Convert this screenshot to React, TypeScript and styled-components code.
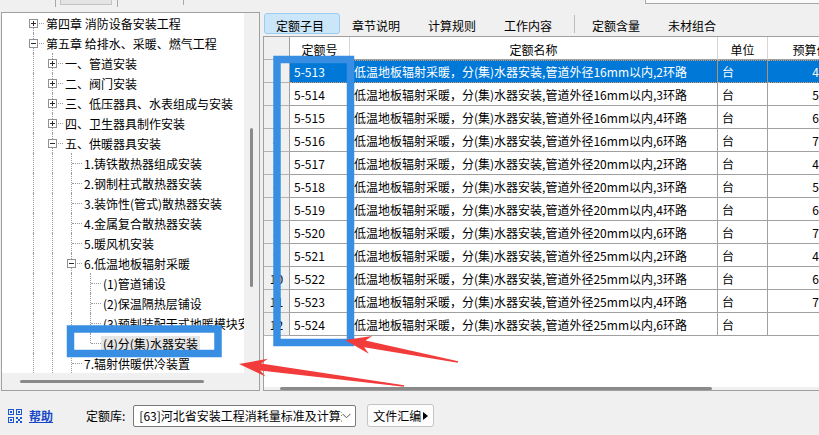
import React from 'react';
import styled, { createGlobalStyle } from 'styled-components';

const GlobalStyle = createGlobalStyle`
  html, body {
    margin: 0;
    padding: 0;
    background: #f0f0f0;
    overflow: hidden;
  }
  body {
    font-family: "Noto Sans CJK SC", "Noto Sans", sans-serif;
    font-size: 12px;
    color: #000;
  }
  * {
    box-sizing: border-box;
  }
`;

const Page = styled.div`
  position: relative;
  width: 819px;
  height: 435px;
  display: flex;
  flex-direction: column;
  overflow: hidden;
  background: #f0f0f0;
`;

/* remains of the toolbar cut off at the top */
const TopStrip = styled.div`
  height: 12px;
  display: flex;
  align-items: flex-start;
  flex-shrink: 0;
`;

const StubLine = styled.div<{ $ml: number; $h: number }>`
  width: 1px;
  height: ${p => p.$h}px;
  margin-left: ${p => p.$ml}px;
  background: #a8a8a8;
`;

const StubBox = styled.div`
  width: 52px;
  height: 5px;
  margin-left: 4px;
  background: #e4e4e4;
  border: 1px solid #c4c4c4;
  border-top: none;
`;

const StubField = styled.div`
  margin-left: auto;
  width: 174px;
  height: 4px;
  background: #fafafa;
  border-left: 1px solid #a8a8a8;
  border-bottom: 1px solid #a8a8a8;
`;

const Main = styled.div`
  display: flex;
  height: 379px;
  flex-shrink: 0;
`;

/* ---------- tree ---------- */

const TreePanel = styled.div`
  margin-left: 1px;
  width: 259px;
  border: 1px solid #a0a0a0;
  display: grid;
  grid-template-columns: 1fr 15px;
  grid-template-rows: 1fr 17px;
  background: #f0f0f0;
  flex-shrink: 0;
`;

const TreeBody = styled.div`
  background: #fff;
  overflow: hidden;
  padding-left: 22px;
`;

const TreeRow = styled.div`
  display: flex;
  align-items: center;
  height: 20px;
`;

const Guide = styled.div`
  width: 19px;
  height: 20px;
  flex-shrink: 0;
  position: relative;
  &::before {
    content: '';
    position: absolute;
    left: 9px;
    top: 0;
    bottom: 0;
    border-left: 1px dotted #9a9a9a;
  }
`;

const Connector = styled.div<{ $noTop?: boolean; $hasNext?: boolean }>`
  width: 19px;
  height: 20px;
  flex-shrink: 0;
  position: relative;
  display: flex;
  align-items: center;
  justify-content: center;
  &::before {
    content: '';
    position: absolute;
    left: 9px;
    top: ${p => (p.$noTop ? 10 : 0)}px;
    bottom: ${p => (p.$hasNext ? 0 : 10)}px;
    border-left: 1px dotted #9a9a9a;
  }
  &::after {
    content: '';
    position: absolute;
    left: 10px;
    right: -1px;
    top: 10px;
    border-top: 1px dotted #9a9a9a;
  }
`;

const Expander = styled.div`
  position: relative;
  z-index: 1;
  width: 9px;
  height: 9px;
  margin-right: 1px;
  border: 1px solid #919191;
  background: #fff;
  display: flex;
  align-items: center;
  justify-content: center;
`;

const TreeLabel = styled.span<{ $sel?: boolean }>`
  margin-left: 1px;
  padding: 0 2px;
  line-height: 15px;
  white-space: nowrap;
  background: ${p => (p.$sel ? '#e6e6e6' : 'transparent')};
`;

const VScroll = styled.div`
  display: flex;
  justify-content: center;
  padding-top: 115px;
`;

const VThumb = styled.div`
  width: 3px;
  height: 159px;
  border-radius: 2px;
  background: #8a8a8a;
`;

const HScroll = styled.div<{ $pad: number }>`
  display: flex;
  align-items: center;
  padding-left: ${p => p.$pad}px;
  background: #f0f0f0;
`;

const HThumb = styled.div<{ $w: number }>`
  width: ${p => p.$w}px;
  height: 3px;
  border-radius: 2px;
  background: #8a8a8a;
`;

const Corner = styled.div`
  background: #f0f0f0;
`;

/* ---------- right panel ---------- */

const RightPanel = styled.div`
  margin-left: 3px;
  flex: 1;
  min-width: 0;
  display: flex;
  flex-direction: column;
`;

const Tabs = styled.div`
  height: 24px;
  display: flex;
  align-items: flex-start;
  padding: 1px 0 0 1px;
  flex-shrink: 0;
`;

const Tab = styled.div<{ $active?: boolean }>`
  height: 21px;
  display: flex;
  align-items: center;
  padding: 3px 15px 0 11px;
  white-space: nowrap;
  border: 1px solid ${p => (p.$active ? '#99cdf2' : 'transparent')};
  border-radius: 3px;
  background: ${p => (p.$active ? '#cce6f9' : 'transparent')};
`;

const TabSep = styled.div`
  width: 1px;
  height: 18px;
  margin: 2px 5px 0 6px;
  background: #bcbcbc;
`;

const Grid = styled.div`
  flex: 1;
  display: flex;
  flex-direction: column;
  border: 1px solid #a0a0a0;
  border-right: none;
  background: #fff;
  overflow: hidden;
`;

const GridRow = styled.div`
  display: flex;
  height: 23px;
  flex-shrink: 0;
`;

const Cell = styled.div<{ $w: number; $sel?: boolean; $align?: 'left' | 'center' | 'right' }>`
  width: ${p => p.$w}px;
  flex-shrink: 0;
  height: 100%;
  display: flex;
  align-items: center;
  justify-content: ${p => (p.$align === 'right' ? 'flex-end' : p.$align === 'center' ? 'center' : 'flex-start')};
  padding: 0 4px;
  white-space: nowrap;
  overflow: hidden;
  background: ${p => (p.$sel ? '#0078d7' : '#fff')};
  color: ${p => (p.$sel ? '#fff' : '#000')};
  border-right: 1px solid ${p => (p.$sel ? '#b5906a' : '#a0a0a0')};
  border-bottom: 1px ${p => (p.$sel ? 'dotted #e2a46a' : 'solid #a0a0a0')};
  border-top: ${p => (p.$sel ? '1px dotted #e2a46a' : 'none')};
`;

const RowHead = styled(Cell)`
  background: #f0f0f0;
  color: #000;
  justify-content: center;
  border-right: 1px solid #a0a0a0;
  border-bottom: 1px solid #b4b4b4;
  border-top: none;
`;

const HeadCell = styled(Cell)`
  justify-content: center;
  padding-top: 2px;
  border-right-color: #d6d6d6;
`;

const GridFill = styled.div`
  flex: 1;
  background: #fff;
`;

/* ---------- bottom bar ---------- */

const BottomBar = styled.div`
  flex: 1;
  display: flex;
  align-items: center;
  padding: 5px 0 0 8px;
`;

const HelpLink = styled.a`
  margin-left: 7px;
  color: #1747c9;
  font-weight: 700;
  text-decoration: underline;
  cursor: pointer;
`;

const FieldLabel = styled.span`
  margin-left: 33px;
`;

const Select = styled.div`
  margin-left: 8px;
  width: 223px;
  height: 22px;
  display: flex;
  align-items: center;
  padding: 0 4px 0 5px;
  background: #fff;
  border: 1px solid #7a7a7a;
  border-radius: 2px;
`;

const SelectText = styled.span`
  flex: 1;
  overflow: hidden;
  white-space: nowrap;
`;

const FileButton = styled.div`
  margin-left: 11px;
  width: 67px;
  height: 23px;
  display: flex;
  align-items: center;
  gap: 2px;
  padding-left: 5px;
  background: #fdfdfd;
  border: 1px solid #c4c4c4;
  border-radius: 3px;
`;

const Overlay = styled.svg`
  position: absolute;
  left: 0;
  top: 0;
  pointer-events: none;
`;

/* ---------- data ---------- */

interface TreeNode {
  level: number;
  label: string;
  exp?: '+' | '-';
  first?: boolean;
  last?: boolean;
  sel?: boolean;
}

const treeNodes: TreeNode[] = [
  { level: 0, label: '第四章 消防设备安装工程', exp: '+', first: true },
  { level: 0, label: '第五章 给排水、采暖、燃气工程', exp: '-' },
  { level: 1, label: '一、管道安装', exp: '+' },
  { level: 1, label: '二、阀门安装', exp: '+' },
  { level: 1, label: '三、低压器具、水表组成与安装', exp: '+' },
  { level: 1, label: '四、卫生器具制作安装', exp: '+' },
  { level: 1, label: '五、供暖器具安装', exp: '-' },
  { level: 2, label: '1.铸铁散热器组成安装' },
  { level: 2, label: '2.钢制柱式散热器安装' },
  { level: 2, label: '3.装饰性(管式)散热器安装' },
  { level: 2, label: '4.金属复合散热器安装' },
  { level: 2, label: '5.暖风机安装' },
  { level: 2, label: '6.低温地板辐射采暖', exp: '-' },
  { level: 3, label: '(1)管道铺设' },
  { level: 3, label: '(2)保温隔热层铺设' },
  { level: 3, label: '(3)预制装配干式地暖模块安装' },
  { level: 3, label: '(4)分(集)水器安装', last: true, sel: true },
  { level: 2, label: '7.辐射供暖供冷装置' },
];

const tabs = ['定额子目', '章节说明', '计算规则', '工作内容', '|', '定额含量', '未材组合'];

const diameters = ['16', '16', '16', '16', '20', '20', '20', '20', '25', '25', '25', '25'];
const loops = ['2', '3', '4', '6'];
const prices = ['452.36', '531.20', '612.85', '745.10', '468.92', '548.30', '629.74', '762.15', '486.40', '635.88', '771.25', ''];

const quotaRows = diameters.map((d, i) => ({
  no: i + 1,
  code: `5-${513 + i}`,
  name: `低温地板辐射采暖，分(集)水器安装,管道外径${d}mm以内,${loops[i % 4]}环路`,
  unit: '台',
  price: prices[i],
}));

const COLS = { head: 26, code: 60, name: 368, unit: 50, price: 86 };

// tapered annotation arrow
const arrowPoints = (
  tx: number, ty: number, ex: number, ey: number,
  headLen: number, headHalf: number, neckHalf: number, tailHalf: number,
) => {
  const dx = ex - tx;
  const dy = ey - ty;
  const len = Math.hypot(dx, dy);
  const ux = dx / len;
  const uy = dy / len;
  const px = -uy;
  const py = ux;
  const bx = tx + ux * headLen;
  const by = ty + uy * headLen;
  const nx = tx + ux * headLen * 0.78;
  const ny = ty + uy * headLen * 0.78;
  const pts = [
    [tx, ty],
    [bx + px * headHalf, by + py * headHalf],
    [nx + px * neckHalf, ny + py * neckHalf],
    [ex + px * tailHalf, ey + py * tailHalf],
    [ex - px * tailHalf, ey - py * tailHalf],
    [nx - px * neckHalf, ny - py * neckHalf],
    [bx - px * headHalf, by - py * headHalf],
  ];
  return pts.map(p => `${p[0].toFixed(1)},${p[1].toFixed(1)}`).join(' ');
};

const ExpanderSign: React.FC<{ sign: '+' | '-' }> = ({ sign }) => (
  <svg width="7" height="7" viewBox="0 0 7 7" shapeRendering="crispEdges">
    <path d="M1 3.5h5" stroke="#2b2b2b" strokeWidth="1" />
    {sign === '+' && <path d="M3.5 1v5" stroke="#2b2b2b" strokeWidth="1" />}
  </svg>
);

const QrIcon = () => (
  <svg width="14" height="14" viewBox="0 0 14 14" shapeRendering="crispEdges">
    <g fill="none" stroke="#1d58d0" strokeWidth="1">
      <rect x="0.5" y="0.5" width="5" height="5" />
      <rect x="8.5" y="0.5" width="5" height="5" />
      <rect x="0.5" y="8.5" width="5" height="5" />
    </g>
    <g fill="#1d58d0">
      <rect x="2" y="2" width="2" height="2" />
      <rect x="10" y="2" width="2" height="2" />
      <rect x="2" y="10" width="2" height="2" />
      <rect x="8" y="8" width="2" height="2" />
      <rect x="12" y="8" width="2" height="2" />
      <rect x="10" y="10" width="2" height="2" />
      <rect x="8" y="12" width="2" height="2" />
      <rect x="12" y="12" width="2" height="2" />
    </g>
  </svg>
);

const App: React.FC = () => {
  return (
    <Page>
      <GlobalStyle />

      <TopStrip>
        <StubLine $ml={55} $h={7} />
        <StubBox />
        <StubLine $ml={5} $h={7} />
        <StubLine $ml={65} $h={5} />
        <StubField />
      </TopStrip>

      <Main>
        <TreePanel>
          <TreeBody>
            {treeNodes.map((node, i) => (
              <TreeRow key={i}>
                {Array.from({ length: node.level }).map((_, g) => (
                  <Guide key={g} />
                ))}
                <Connector $noTop={node.first} $hasNext={!node.last}>
                  {node.exp && (
                    <Expander>
                      <ExpanderSign sign={node.exp} />
                    </Expander>
                  )}
                </Connector>
                <TreeLabel $sel={node.sel}>{node.label}</TreeLabel>
              </TreeRow>
            ))}
          </TreeBody>
          <VScroll>
            <VThumb />
          </VScroll>
          <HScroll $pad={18}>
            <HThumb $w={184} />
          </HScroll>
          <Corner />
        </TreePanel>

        <RightPanel>
          <Tabs>
            {tabs.map((t, i) =>
              t === '|' ? <TabSep key={i} /> : <Tab key={i} $active={i === 0}>{t}</Tab>,
            )}
          </Tabs>

          <Grid>
            <GridRow>
              <RowHead $w={COLS.head} />
              <HeadCell $w={COLS.code}>定额号</HeadCell>
              <HeadCell $w={COLS.name}>定额名称</HeadCell>
              <HeadCell $w={COLS.unit}>单位</HeadCell>
              <HeadCell $w={COLS.price}>预算价</HeadCell>
            </GridRow>

            {quotaRows.map((row, i) => {
              const sel = i === 0;
              return (
                <GridRow key={row.code}>
                  <RowHead $w={COLS.head}>{row.no}</RowHead>
                  <Cell $w={COLS.code} $sel={sel}>{row.code}</Cell>
                  <Cell $w={COLS.name} $sel={sel}>{row.name}</Cell>
                  <Cell $w={COLS.unit} $sel={sel}>{row.unit}</Cell>
                  <Cell $w={COLS.price} $sel={sel} $align="right">{row.price}</Cell>
                </GridRow>
              );
            })}

            <GridFill />
            <HScroll $pad={16}>
              <HThumb $w={432} />
            </HScroll>
          </Grid>
        </RightPanel>
      </Main>

      <BottomBar>
        <QrIcon />
        <HelpLink>帮助</HelpLink>
        <FieldLabel>定额库:</FieldLabel>
        <Select>
          <SelectText>[63]河北省安装工程消耗量标准及计算规则</SelectText>
          <svg width="9" height="6" viewBox="0 0 9 6">
            <path d="M0.5 0.8 L4.5 4.8 L8.5 0.8" fill="none" stroke="#555" strokeWidth="1" />
          </svg>
        </Select>
        <FileButton>
          文件汇编
          <svg width="5" height="8" viewBox="0 0 5 8">
            <path d="M0 0 L5 4 L0 8 Z" fill="#000" />
          </svg>
        </FileButton>
      </BottomBar>

      <Overlay width="819" height="435" viewBox="0 0 819 435">
        <rect x="70.5" y="329" width="147.5" height="24.5" fill="none" stroke="#388ee2" strokeWidth="7.5" />
        <rect x="277" y="59.5" width="73.5" height="283" fill="none" stroke="#388ee2" strokeWidth="7.5" />
        <polygon points={arrowPoints(239, 364, 404, 386, 28, 9, 3.5, 0.8)} fill="#f23c3c" />
        <polygon points={arrowPoints(345, 340, 458, 362, 26, 9, 3.5, 0.8)} fill="#f23c3c" />
      </Overlay>
    </Page>
  );
};

export default App;
